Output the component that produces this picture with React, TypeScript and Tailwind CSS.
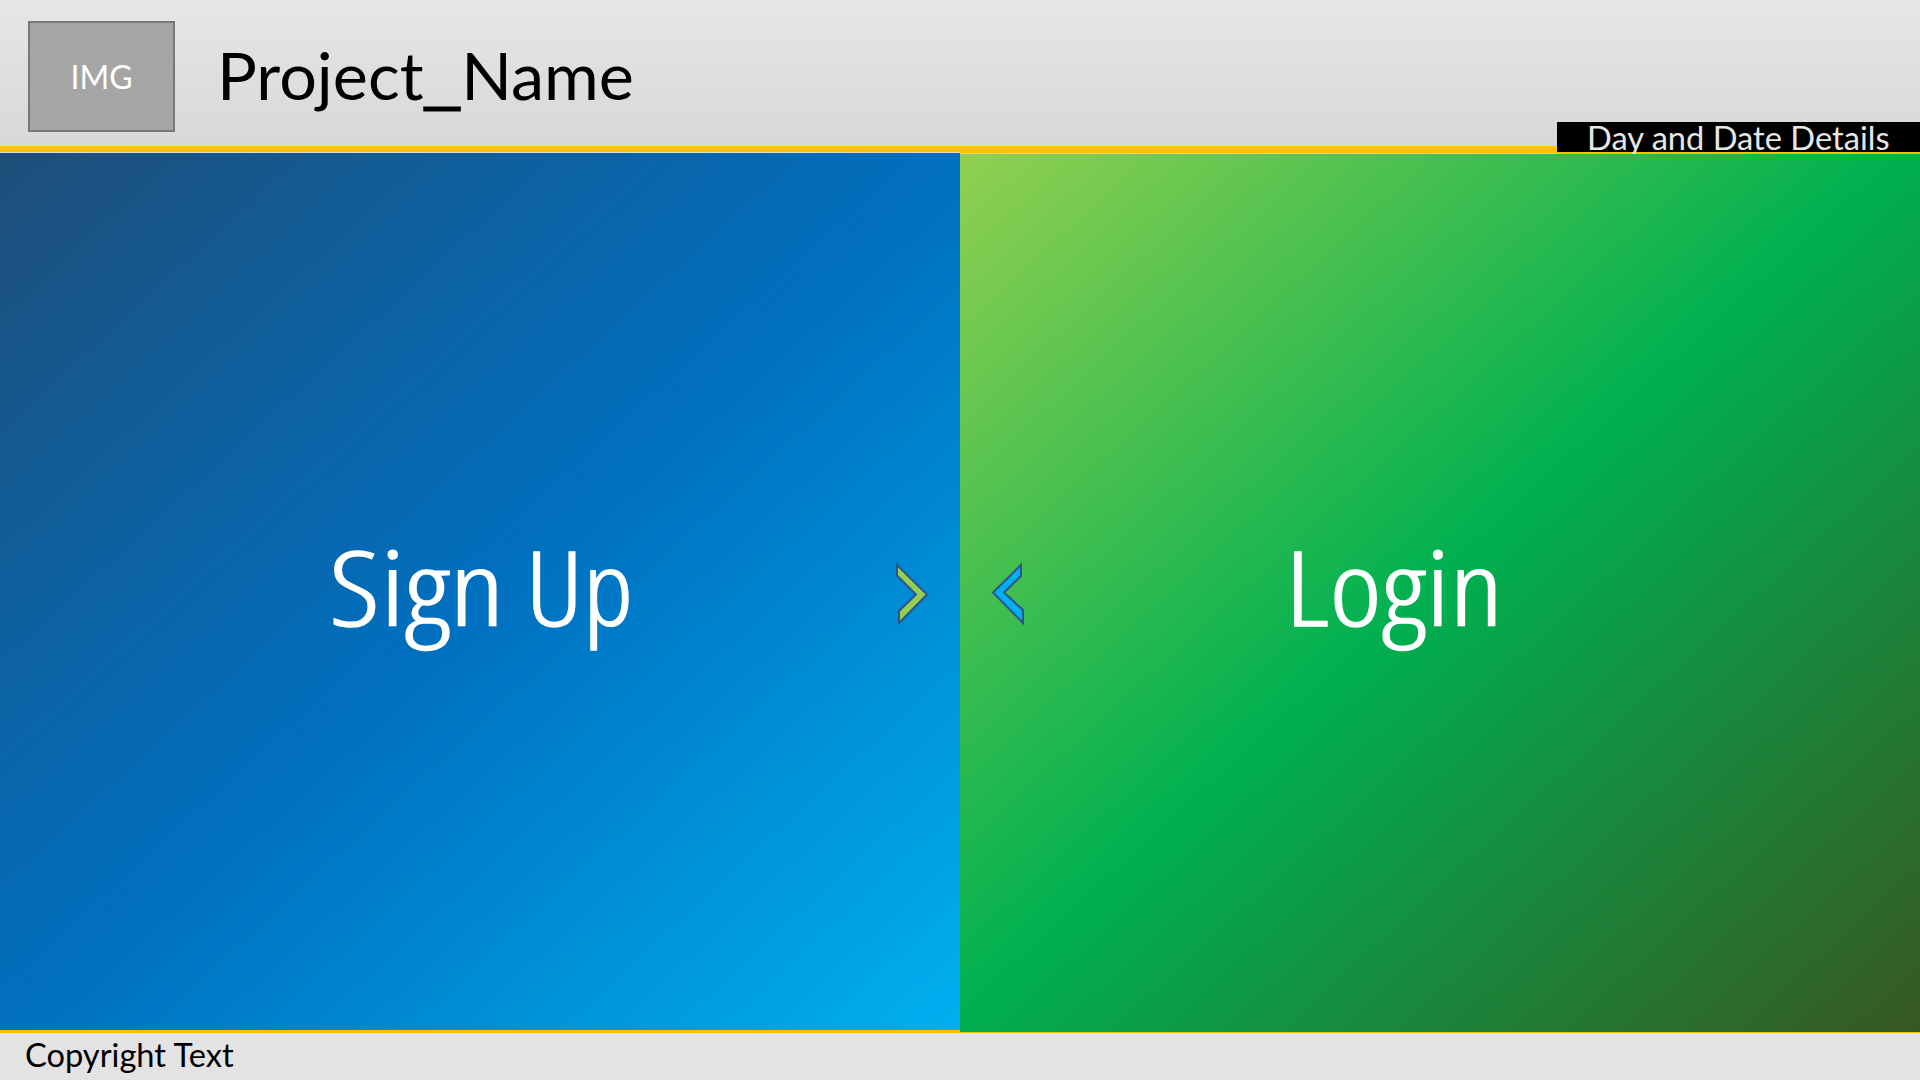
const label = "block origin-left whitespace-nowrap leading-none font-['Lato',sans-serif]";
const title = "whitespace-nowrap font-['Open_Sans',sans-serif] text-[104px] font-light leading-none tracking-[0.5px] text-white [-webkit-text-stroke:1.4px_white] [font-stretch:75%]";

function Chevron({ points, fill, className }: { points: string; fill: string; className: string }) {
  return (
    <svg className={className} width="36" height="66" viewBox="0 0 36 66" aria-hidden="true">
      <polygon points={points} fill={fill} stroke="#2f528f" strokeWidth="2" strokeMiterlimit="10" />
    </svg>
  );
}

export default function App() {
  return (
    <div className="flex h-[1080px] w-[1920px] flex-col overflow-hidden bg-[#e3e3e3]">
      <header className="relative flex h-[146px] shrink-0 items-start bg-linear-to-b from-[#e7e6e6] to-[#d9d8d9] pl-7 pt-[21px]">
        <div className="flex h-[111px] w-[147px] items-center justify-center border-2 border-[#787878] bg-[#a5a5a5]">
          <span className="font-['Lato',sans-serif] text-[32px] leading-none text-white">IMG</span>
        </div>
        <h1 className={`${label} ml-[42px] mt-[22px] scale-x-[1.023] text-[65px] text-black`}>
          Project<span className="ml-[3px] mr-1 inline-block translate-y-[2px] scale-x-[1.38] [-webkit-text-stroke:1px_black]">_</span>Name
        </h1>
      </header>
      <main className="relative grid h-[887px] shrink-0 grid-cols-2">
        <div className="flex flex-col bg-[#ffc000]">
          <div className="mt-1.5 h-px bg-[#dfdcd0]" />
          <section className="relative flex h-[877px] items-center justify-center bg-linear-to-br/srgb from-[#1f4e79] via-[#0070c0] via-51% to-[#00b0f0]">
            <h2 className={`${title} flex -translate-y-[6px]`}>
              <span className="origin-right translate-x-[12px] scale-x-[1.22]">Sign</span>
              <span className="whitespace-pre">{" "}</span>
              <span className="origin-left translate-x-[13px] scale-x-[1.09]">Up</span>
            </h2>
            <Chevron className="absolute left-[894px] top-[408px]" fill="#92d050" points="3,4 33,33.5 5,62 5,50 22,33.5 3,14.5" />
          </section>
        </div>
        <div className="flex flex-col bg-[#ffc000]">
          <div className="mt-[7px] h-px bg-[#e5d58b]" />
          <div className="absolute right-0 top-[-24px] flex h-8 w-[363px] justify-center border-b-2 border-[#ffc000] bg-black">
            <span className="scale-x-[1.02] whitespace-nowrap font-['Lato',sans-serif] text-[32px] leading-[32px] text-[#e7e6e6]">Day and Date Details</span>
          </div>
          <section className="relative flex h-[878px] items-center justify-center bg-linear-to-br/srgb from-[#92d050] via-[#00b050] via-49% to-[#385723]">
            <h2 className={`${title} mr-[90px] -translate-y-[7px] scale-x-[1.19]`}>Login</h2>
            <Chevron className="absolute left-[30px] top-[407px]" fill="#00b0f0" points="31,4 3,31.5 33,62 33,49 14,31.5 31,15" />
          </section>
        </div>
      </main>
      <footer className="flex flex-1 items-start bg-[#e3e3e3] pl-[25px]">
        <span className={`${label} mt-1.5 scale-x-[1.02] text-[32px] text-black`}>Copyright Text</span>
      </footer>
    </div>
  );
}
